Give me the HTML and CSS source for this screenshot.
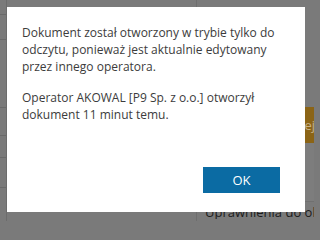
FILE: index.html
```html
<!DOCTYPE html>
<html lang="pl">
<head>
<meta charset="utf-8">
<title>Dokument</title>
<link rel="stylesheet" href="styles.css">
</head>
<body>
<div class="page">
  <div class="side">
    <div class="row r1"></div>
    <div class="row r2"></div>
    <div class="row r3"></div>
    <div class="row r4"></div>
    <div class="row r5"></div>
    <div class="row r6"></div>
  </div>
  <div class="main">
    <div class="col-left"></div>
    <div class="col-right">
      <div class="top"></div>
      <div class="orange"><span class="orange-text">Zapisz zmiany tej</span></div>
      <div class="grey"></div>
      <div class="perm">Uprawnienia do obiektu</div>
    </div>
  </div>
</div>
<div class="dialog">
  <div class="dialog-body">
    <p class="msg">Dokument został otworzony w trybie tylko do odczytu, ponieważ jest aktualnie edytowany przez innego operatora.</p>
    <p class="msg">Operator AKOWAL [P9 Sp. z o.o.] otworzył dokument 11 minut temu.</p>
  </div>
  <div class="dialog-footer">
    <button class="btn-ok">OK</button>
  </div>
</div>
</body>
</html>
```
FILE: styles.css
```css
html, body {
  margin: 0;
  padding: 0;
}
body {
  width: 314px;
  height: 221px;
  overflow: hidden;
  background: #7a7a7a;
  font-family: "Open Sans", "Noto Sans", sans-serif;
  position: relative;
}
.page {
  display: flex;
  height: 221px;
  overflow: hidden;
}
.side {
  width: 6px;
  border-right: 1px solid #6c6c6c;
  display: flex;
  flex-direction: column;
}
.row {
  border-bottom: 1px solid #6a6a6a;
  box-sizing: border-box;
}
.r1 { height: 15px; }
.r2 { height: 25px; }
.r3 { height: 68px; }
.r4 { height: 28px; }
.r5 { height: 22px; }
.r6 { height: 30px; }
.main {
  flex: 1;
  display: flex;
  min-width: 0;
}
.col-left {
  width: 189px;
  border-right: 1px solid #6e6e6e;
}
.col-right {
  flex: 1;
  min-width: 0;
  display: flex;
  flex-direction: column;
  overflow: hidden;
}
.top {
  height: 107px;
}
.orange {
  height: 36px;
  background: #8b6416;
  display: flex;
  align-items: center;
  justify-content: flex-end;
  overflow: hidden;
  white-space: nowrap;
}
.orange-text {
  color: #c7b189;
  font-size: 13px;
  margin-right: -1px;
}
.grey {
  height: 58px;
  background: #7d7d7d;
  border-bottom: 1px solid #707070;
}
.perm {
  color: #1c1c1c;
  font-size: 13px;
  white-space: nowrap;
  overflow: hidden;
  padding-left: 8px;
  line-height: 14px;
  margin-top: 3px;
}
.dialog {
  position: absolute;
  left: 7px;
  top: 7px;
  width: 298px;
  height: 205px;
  background: #ffffff;
  box-sizing: border-box;
  padding: 17px 10px 19px 15px;
  display: flex;
  flex-direction: column;
}
.dialog-body {
  flex: 1;
}
.msg {
  margin: 0 0 14px 0;
  font-size: 12px;
  line-height: 17px;
  color: #3c3c3c;
}
.dialog-footer {
  display: flex;
  justify-content: flex-end;
  padding-right: 15px;
}
.btn-ok {
  width: 77px;
  height: 26px;
  border: none;
  background: #0b6ba3;
  color: #ffffff;
  font-family: "Open Sans", "Noto Sans", sans-serif;
  font-size: 13px;
  padding: 0;
}
```
